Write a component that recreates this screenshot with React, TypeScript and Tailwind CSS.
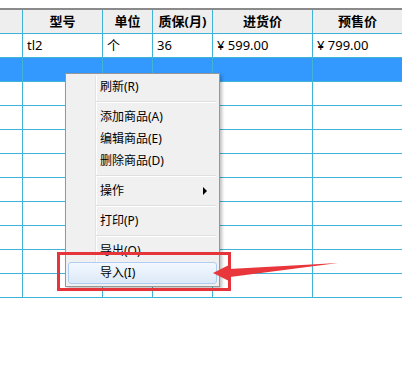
import React from "react"

const cols = [
  { w: "w-[23px]", label: "" },
  { w: "w-[80px]", label: "型号" },
  { w: "w-[50px]", label: "单位" },
  { w: "w-[60px]", label: "质保(月)" },
  { w: "w-[100px]", label: "进货价" },
  { w: "flex-1", label: "预售价" },
]

const firstRow = ["", "tl2", "个", "36", "¥ 599.00", "¥ 799.00"]

const Row = ({ cells, selected }: { cells: string[]; selected?: boolean }) => (
  <div className={`flex h-[24px] border-b border-[#3fb4d6] ${selected ? "bg-[#3399ff]" : "bg-white"}`}>
    {cols.map((c, i) => (
      <div
        key={i}
        className={`${c.w} h-full flex items-center pl-[4px] text-[13px] text-black ${i < cols.length - 1 ? "border-r border-[#3fb4d6]" : ""}`}
      >
        {cells[i]}
      </div>
    ))}
  </div>
)

const Sep = () => (
  <div className="h-[8px] flex items-center pl-[28px] pr-[1px]">
    <div className="w-full">
      <div className="h-px bg-[#e0e0e0]" />
      <div className="h-px bg-white" />
    </div>
  </div>
)

const Item = ({ label, sub, hot }: { label: string; sub?: boolean; hot?: boolean }) => (
  <div
    className={`h-[22px] flex items-center justify-between pl-[31px] pr-[9px] text-[12px] text-black rounded-[3px] border ${
      hot ? "border-[#aecdf3] bg-gradient-to-b from-[#f3f8fe] to-[#dde9f8]" : "border-transparent"
    }`}
  >
    <span>{label}</span>
    {sub && (
      <span className="w-0 h-0 border-y-[4px] border-y-transparent border-l-[4px] border-l-black" />
    )}
  </div>
)

const App: React.FC = () => {
  return (
    <div
      className="relative w-[402px] h-[367px] bg-white overflow-hidden"
      style={{ fontFamily: '"Noto Sans", "Noto Sans CJK SC", sans-serif' }}
    >
      <div className="pt-[8px]">
        <div className="border-t-2 border-[#8a8a8a]">
          <div className="flex h-[24px] bg-[#eeeeee] border-b border-[#3fb4d6]">
            {cols.map((c, i) => (
              <div
                key={i}
                className={`${c.w} h-full flex items-center justify-center text-[13px] font-bold text-black ${i < cols.length - 1 ? "border-r border-[#3fb4d6]" : ""}`}
              >
                {c.label}
              </div>
            ))}
          </div>
          <Row cells={firstRow} />
          <Row cells={[]} selected />
          {Array.from({ length: 9 }).map((_, i) => (
            <Row key={i} cells={[]} />
          ))}
        </div>
      </div>

      {/* context menu */}
      <div className="absolute left-[65px] top-[73px] w-[155px] border border-[#979797] bg-[#f0f0f0] p-[2px] shadow-[2px_2px_3px_rgba(0,0,0,0.25)]">
        <div className="absolute left-[29px] top-[2px] bottom-[2px] w-[2px] flex">
          <div className="w-px bg-[#e2e3e3]" />
          <div className="w-px bg-white" />
        </div>
        <div className="relative">
          <Item label="刷新(R)" />
          <Sep />
          <Item label="添加商品(A)" />
          <Item label="编辑商品(E)" />
          <Item label="删除商品(D)" />
          <Sep />
          <Item label="操作" sub />
          <Sep />
          <Item label="打印(P)" />
          <Sep />
          <Item label="导出(O)" />
          <Item label="导入(I)" hot />
        </div>
      </div>

      {/* red highlight box */}
      <div className="absolute left-[57px] top-[252px] w-[174px] h-[39px] border-[3px] border-[#e5353a]" />

      {/* red arrow */}
      <svg className="absolute left-0 top-0" width="402" height="367" viewBox="0 0 402 367">
        <polygon
          points="213,273 229,265 229,269 338,263 230,277 229,281"
          fill="#e8363b"
        />
      </svg>
    </div>
  )
}

export default App
